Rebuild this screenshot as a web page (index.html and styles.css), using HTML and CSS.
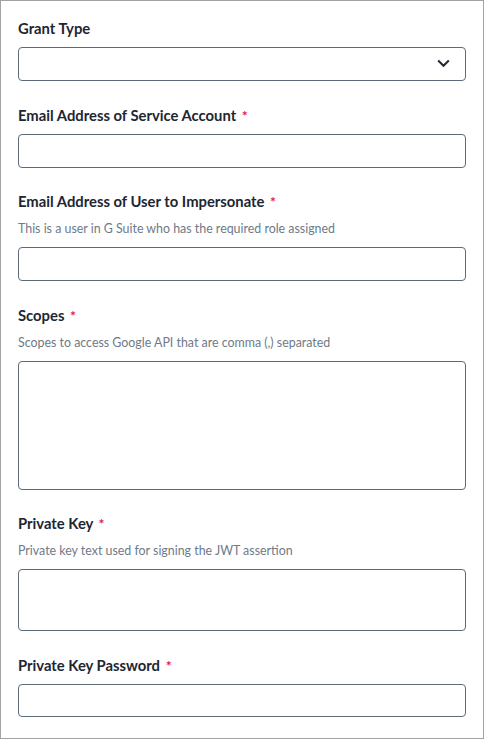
FILE: index.html
```html
<!DOCTYPE html>
<html lang="en">
<head>
    <meta charset="UTF-8"/>
    <title>Service Account</title>
    <link rel="stylesheet" href="styles.css">
</head>
<body>
<form class="auth_form">
    <div class="field">
        <label class="field_label" for="grantType">Grant Type</label>
        <div class="select_wrap">
            <select id="grantType" class="field_input"></select>
            <svg class="select_chevron" width="13" height="9" viewBox="0 0 13 9">
                <path d="M1.2 1.5 L6.5 6.8 L11.8 1.5" fill="none" stroke="#1f2a36" stroke-width="2"/>
            </svg>
        </div>
    </div>

    <div class="field">
        <label class="field_label" for="serviceEmail">Email Address of Service Account <span class="required">*</span></label>
        <input id="serviceEmail" class="field_input" type="text">
    </div>

    <div class="field">
        <label class="field_label" for="userEmail">Email Address of User to Impersonate <span class="required">*</span></label>
        <p class="field_help">This is a user in G Suite who has the required role assigned</p>
        <input id="userEmail" class="field_input" type="text">
    </div>

    <div class="field">
        <label class="field_label" for="scopes">Scopes <span class="required">*</span></label>
        <p class="field_help">Scopes to access Google API that are comma (,) separated</p>
        <textarea id="scopes" class="field_input scopes_box"></textarea>
    </div>

    <div class="field">
        <label class="field_label" for="privateKey">Private Key <span class="required">*</span></label>
        <p class="field_help">Private key text used for signing the JWT assertion</p>
        <textarea id="privateKey" class="field_input key_box"></textarea>
    </div>

    <div class="field">
        <label class="field_label" for="keyPassword">Private Key Password <span class="required">*</span></label>
        <input id="keyPassword" class="field_input password_box" type="password">
    </div>
</form>
</body>
</html>
```

FILE: styles.css
```css
* {
    box-sizing: border-box;
}

html, body {
    height: 100%;
    margin: 0;
}

body {
    font-family: Lato, 'Liberation Sans', sans-serif;
    color: #1d2631;
    background: #ffffff;
}

.auth_form {
    height: 100%;
    border: 1px solid #a3a3a3;
    padding: 17px 17px 0 17px;
}

.field {
    margin-bottom: 23.5px;
}

.field_label {
    display: block;
    font-size: 14.8px;
    font-weight: bold;
    line-height: 20px;
    margin-bottom: 9px;
}

.required {
    color: #e2185b;
    font-size: 14px;
    line-height: 0;
    margin-left: 2px;
}

/* label margin collapses into this one, so the gap is 10px */
.field_help {
    margin: 10px 0 10px 0;
    font-size: 12.4px;
    line-height: 16px;
    color: #6e7a87;
}

.field_input {
    display: block;
    width: 100%;
    height: 34px;
    border: 1px solid #5c6b7a;
    border-radius: 4px;
    background: #ffffff;
    font-family: inherit;
    font-size: 14px;
    padding: 0 10px;
    resize: none;
}

select.field_input {
    appearance: none;
}

.select_wrap {
    position: relative;
}

.select_chevron {
    position: absolute;
    right: 16px;
    top: 12px;
    pointer-events: none;
}

.scopes_box {
    height: 129px;
}

.key_box {
    height: 62px;
}

.password_box {
    height: 33px;
}
```
